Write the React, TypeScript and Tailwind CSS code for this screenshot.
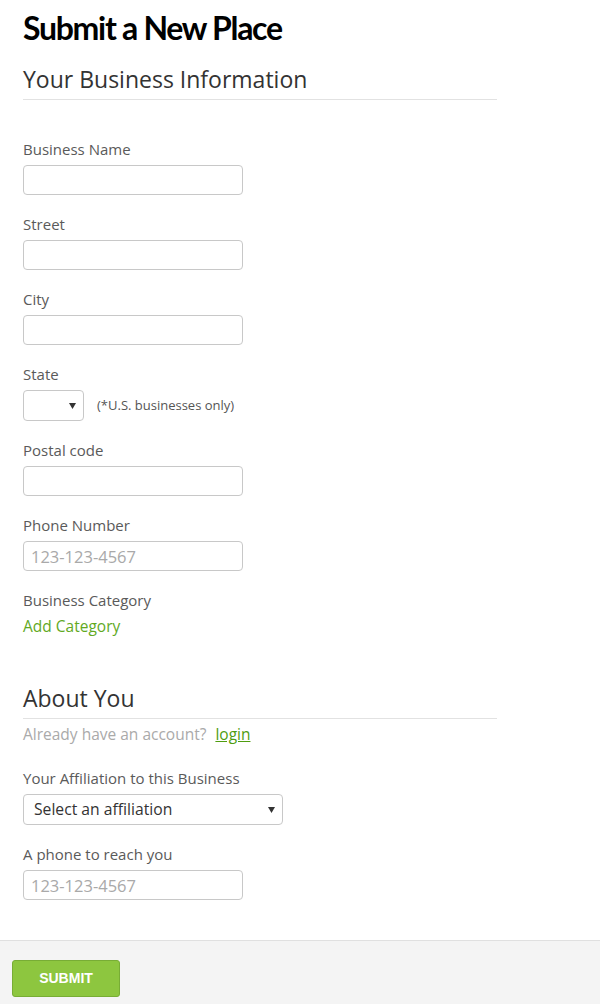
import React from "react";

const body = { fontFamily: '"Open Sans", "Noto Sans", sans-serif' };

function Label({ children }: { children: React.ReactNode }) {
  return <div className="text-[15px] leading-[18px] text-[#5a5a5a]">{children}</div>;
}

function Field({ label, placeholder }: { label: string; placeholder?: string }) {
  return (
    <div className="mb-[20px]">
      <Label>{label}</Label>
      <input
        type="text"
        placeholder={placeholder}
        className="mt-[7px] block h-[30px] w-[220px] rounded-[4px] border border-[#c8c8c8] bg-white px-[7px] text-[16.5px] text-[#333] placeholder:text-[#a9a9a9] outline-none"
      />
    </div>
  );
}

function Arrow() {
  return (
    <svg width="7" height="6" viewBox="0 0 7 6" className="block">
      <path d="M0 0 L7 0 L3.5 6 Z" fill="#333" />
    </svg>
  );
}

export default function App() {
  return (
    <div className="min-h-[1004px] w-[600px] bg-white" style={body}>
      <div className="pl-[23px]">
        <h1
          className="mt-[9px] text-[32px] font-bold leading-[38px] tracking-[-1.3px] text-black"
          style={{ fontFamily: 'Lato, "Liberation Sans", sans-serif' }}
        >
          Submit a New Place
        </h1>
        <div className="mt-[17px] w-[474px] border-b border-[#e2e2e2] pb-[5px]">
          <h2 className="text-[23px] font-normal leading-[30px] text-[#333]">Your Business Information</h2>
        </div>

        <div className="mt-[40px]">
          <Field label="Business Name" />
          <Field label="Street" />
          <Field label="City" />
          <div className="mb-[20px]">
            <Label>State</Label>
            <div className="mt-[7px] flex items-center">
              <div className="flex h-[31px] w-[61px] items-center justify-end rounded-[4px] border border-[#c8c8c8] bg-white pr-[7px]">
                <Arrow />
              </div>
              <span className="ml-[13px] text-[13px] text-[#555]">(*U.S. businesses only)</span>
            </div>
          </div>
          <Field label="Postal code" />
          <Field label="Phone Number" placeholder="123-123-4567" />
          <Label>Business Category</Label>
          <div className="mt-[7px] text-[15.5px] leading-[20px] text-[#62a91f]">Add Category</div>
        </div>

        <div className="mt-[47px] w-[474px] border-b border-[#e2e2e2] pb-[5px]">
          <h2 className="text-[23px] font-normal leading-[30px] text-[#333]">About You</h2>
        </div>
        <div className="mt-[5px] text-[15.5px] leading-[20px] text-[#aaa]">
          Already have an account?<span className="inline-block w-[9px]" />
          <a className="text-[#4f9d10] underline">login</a>
        </div>

        <div className="mt-[25px]">
          <div className="mb-[20px]">
            <Label>Your Affiliation to this Business</Label>
            <div className="mt-[7px] flex h-[31px] w-[260px] items-center justify-between rounded-[4px] border border-[#c8c8c8] bg-white pl-[10px] pr-[7px]">
              <span className="text-[15.7px] text-[#333]">Select an affiliation</span>
              <Arrow />
            </div>
          </div>
          <Field label="A phone to reach you" placeholder="123-123-4567" />
        </div>
      </div>

      <div className="mt-[40px] h-[64px] border-t border-[#e0e0e0] bg-[#f4f4f4] pl-[12px] pt-[19px]">
        <button
          className="h-[37px] w-[108px] rounded-[3px] border border-[#78ad35] bg-[#8dc63f] text-[14px] font-bold text-white"
          style={{ fontFamily: '"Liberation Sans", Arial, sans-serif' }}
        >
          SUBMIT
        </button>
      </div>
    </div>
  );
}
